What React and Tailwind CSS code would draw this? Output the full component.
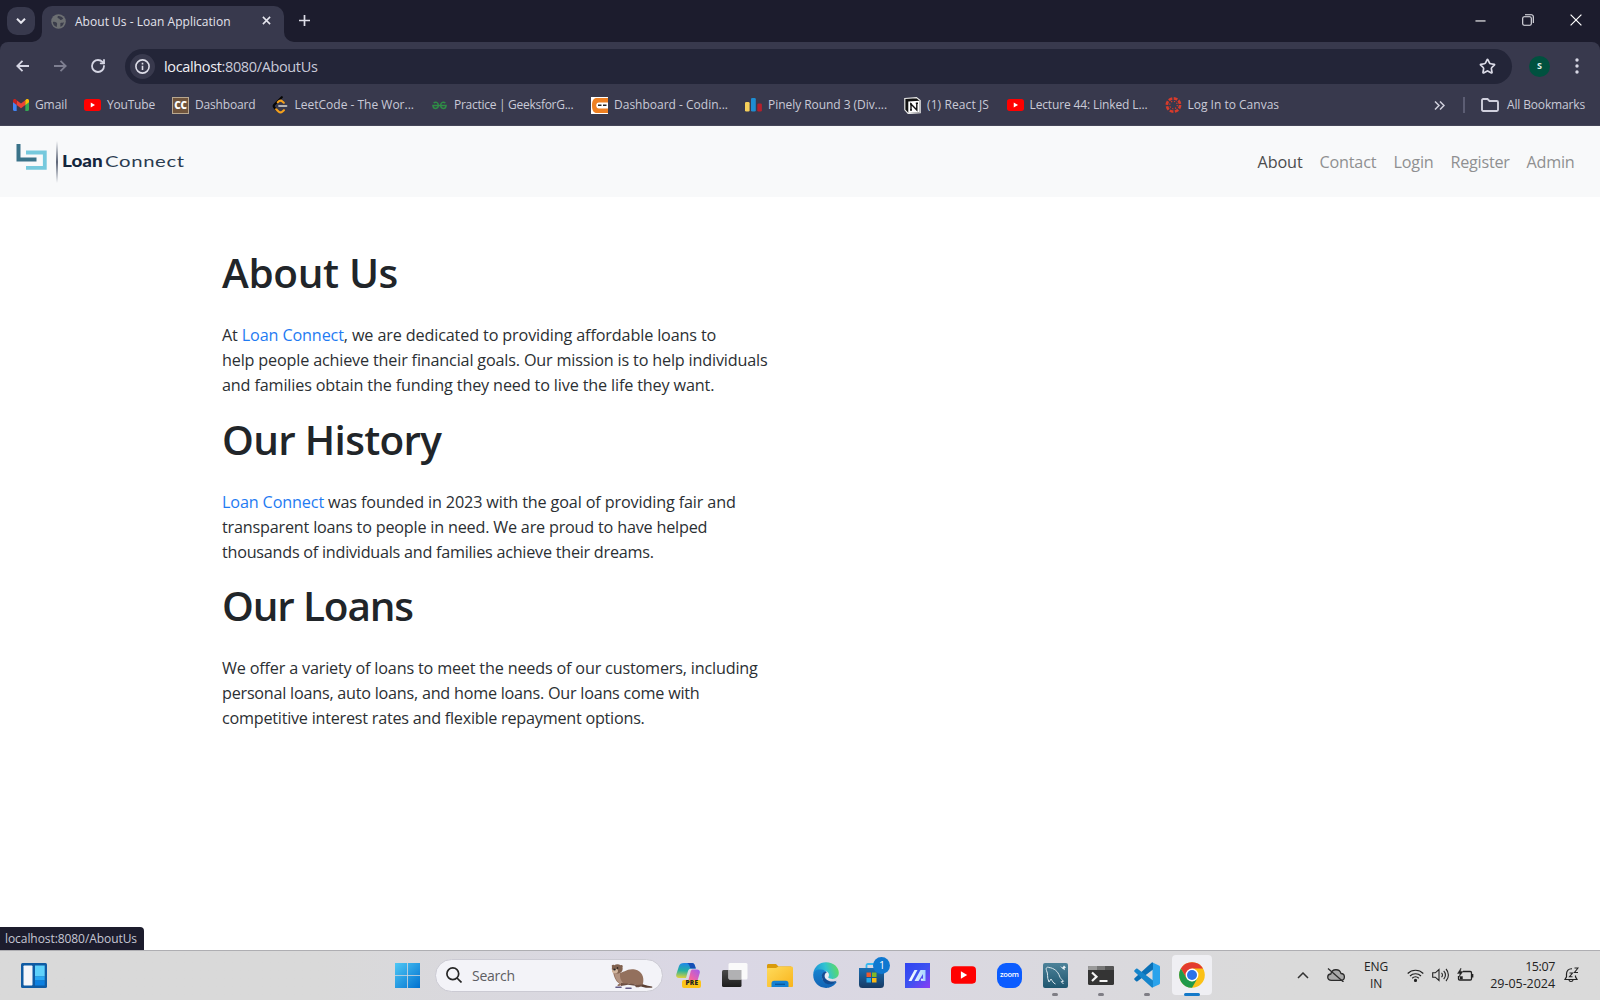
import { Star, RotateCw } from "lucide-react";

const YouTubeMark = ({ className }) => (
  <svg viewBox="0 0 26 18" className={className}>
    <rect width="26" height="18" rx="4" fill="#ff0000" />
    <path d="M10.3 5.2 16.8 9l-6.5 3.8z" fill="#fff" />
  </svg>
);

const GmailMark = () => (
  <svg viewBox="0 0 24 18" className="h-3 w-[16px]">
    <path d="M0 3v13.2C0 17.2.8 18 1.8 18H5.5V7z" fill="#4285f4" />
    <path d="M24 3v13.2c0 1-.8 1.8-1.8 1.8h-3.7V7z" fill="#34a853" />
    <path d="M5.500 1.800 12 6.800l6.500-5V9L12 14 5.500 9z" fill="#ea4335" />
    <path d="M0 3C0 .3 2.600-.6 4.500.9l1 .9V9L0 5z" fill="#c5221f" />
    <path d="M24 3c0-2.700-2.600-3.600-4.500-2.100l-1 .9V9L24 5z" fill="#fbbc04" />
  </svg>
);

const CodeChefMark = () => (
  <div className="flex size-[17px] items-center justify-center border border-[#b8a78f] bg-[#6f543d] text-[10px] font-extrabold leading-none tracking-[-0.3px] text-white">
    CC
  </div>
);

const LeetCodeMark = () => (
  <svg viewBox="0 0 16 18" className="h-[18px] w-[16px]" fill="none" strokeWidth="2.1" strokeLinecap="round">
    <path d="M9.8 1.2 2.5 8.4c-1 1-1 2.3 0 3.3l1.7 1.7" stroke="#050505" />
    <path d="M5.8 6.2 7 5.100c1.200-.7 2.400-.5 3.400.4l1.400 1.200M4.200 13.300l2.300 2.200c1.200 1.100 2.800 1.100 4 0l1.400-1.300" stroke="#f5a11c" />
    <path d="M7 10h7.500" stroke="#b3b3b3" strokeWidth="1.8" />
  </svg>
);

const GeeksMark = () => (
  <svg viewBox="0 0 16 10" className="h-[9px] w-[15px]" fill="none" stroke="#2f8d46" strokeWidth="1.6">
    <path d="M1.5 2.2c1.8-1.700 5.200-1 5.200 2.600 0 4.600-5.600 4.600-6 .3h14.600c-.4 4.300-6 4.300-6-.3 0-3.600 3.400-4.300 5.200-2.600" />
  </svg>
);

const CodingNinjasMark = () => (
  <svg viewBox="0 0 17 17" className="size-[17px]">
    <rect width="17" height="17" fill="#fff" />
    <path d="M17 1H6C2.600 1 1 3.500 1 8.500S2.600 16 6 16h11v-4.500H8c-2 0-2.500-1-2.500-3s.5-3 2.500-3h9z" fill="#ee8022" />
    <rect x="5.500" y="6" width="11.500" height="5" rx="2" fill="#fff" />
    <path d="M7 8.300h3.500M12 8.300h3.500" stroke="#222" strokeWidth="1.500" />
  </svg>
);

const CodeforcesMark = () => (
  <svg viewBox="0 0 17 14" className="h-[14px] w-[17px]">
    <rect x="0" y="4" width="4.600" height="9.500" rx="1.300" fill="#f6cf5a" />
    <rect x="6" y="0" width="4.800" height="13.500" rx="1.300" fill="#1e8dd2" />
    <rect x="12.300" y="5.500" width="4.600" height="8" rx="1.300" fill="#b5202c" />
  </svg>
);

const NotionMark = () => (
  <svg viewBox="0 0 17 17" className="size-[17px]">
    <path d="M.8 1.500 12.500.6l3.700 2.900v12.300l-12 .7L.8 12.800z" fill="#111" stroke="#e8e8e8" strokeWidth="1.200" />
    <path d="M4.300 4.500 15.600 3.800v11.400L4.300 16z" fill="#fff" />
    <path d="M7 13V7l5.800 6V6.300M6 7h2M6 13h2M11.800 6.300h2.200" stroke="#111" strokeWidth="1.400" fill="none" />
  </svg>
);

const CanvasMark = () => (
  <svg viewBox="0 0 18 18" className="size-[18px]" fill="none" stroke="#d83b2b">
    <circle cx="9" cy="9" r="7" strokeWidth="2.800" strokeDasharray="4 1.500" />
    <circle cx="9" cy="9" r="4" strokeWidth="1.300" strokeDasharray="1.300 1.840" />
  </svg>
);

const bookmarks = [
  { label: "Gmail", icon: <GmailMark />, w: "w-[72px]", t: "tracking-[-0.1px]" },
  { label: "YouTube", icon: <YouTubeMark className="h-3 w-[17px]" />, w: "w-[88px]", t: "tracking-[-0.2px]" },
  { label: "Dashboard", icon: <CodeChefMark />, w: "w-[99.5px]", t: "tracking-[-0.17px]" },
  { label: "LeetCode - The Wor...", icon: <LeetCodeMark />, w: "w-[159.5px]", t: "" },
  { label: "Practice | GeeksforG...", icon: <GeeksMark />, w: "w-[160px]", t: "tracking-[-0.28px]" },
  { label: "Dashboard - Codin...", icon: <CodingNinjasMark />, w: "w-[154px]", t: "" },
  { label: "Pinely Round 3 (Div....", icon: <CodeforcesMark />, w: "w-[159px]", t: "tracking-[-0.05px]" },
  { label: "(1) React JS", icon: <NotionMark />, w: "w-[102.500px]", t: "tracking-[0.1px]" },
  { label: "Lecture 44: Linked L...", icon: <YouTubeMark className="h-3 w-[17px]" />, w: "w-[158px]", t: "tracking-[-0.13px]" },
  { label: "Log In to Canvas", icon: <CanvasMark />, w: "w-[130px]", t: "" },
];

function TabStrip() {
  return (
    <div className="flex h-[42px] shrink-0 items-start bg-[#1c1c2d]">
      <button className="mt-[7px] ml-[7px] flex size-[28px] items-center justify-center rounded-[10px] bg-[#38394d]">
        <svg viewBox="0 0 10 6" className="h-[6px] w-[10px]" fill="none" stroke="#e6e6ee" strokeWidth="2">
          <path d="m1 .8 4 4 4-4" />
        </svg>
      </button>
      <div className="relative mt-[6px] ml-[7px] flex h-[36px] w-[242px] items-center rounded-t-[10px] bg-[#38394d] pb-[5px]">
        <svg viewBox="0 0 10 10" className="absolute bottom-0 -left-[10px] size-[10px]"><path d="M10 0v10H0A10 10 0 0 0 10 0" fill="#38394d" /></svg>
        <svg viewBox="0 0 10 10" className="absolute -right-[10px] bottom-0 size-[10px]"><path d="M0 0v10h10A10 10 0 0 1 0 0" fill="#38394d" /></svg>
        <svg viewBox="0 0 16 16" className="ml-[9px] size-[15px]">
          <circle cx="8" cy="8" r="7.800" fill="#6c6f72" />
          <path d="M2 8.500c2-.8 4 .2 4.500 1.700.3 1.200-.5 2-.3 3.600C3.800 13.300 2 11 2 8.500M7.500 2.200c1.500-.5 4.500.7 5.600 2.800-1 .3-1.700 1.500-3 1.300C9 6 9.500 5 8.200 4.800 6.800 4.500 6.500 3 7.500 2.200M10 9.500c1.500-.5 3-.2 3.800-.8-.3 2.300-1.800 4.300-3.800 5z" fill="#3b3d4b" />
        </svg>
        <span className="mt-px ml-[9px] whitespace-nowrap text-[12px] leading-4 tracking-[0.03px] text-[#e3e3ec]">About Us - Loan Application</span>
        <svg viewBox="0 0 10 10" className="absolute top-[10px] left-[220px] size-[9px]" stroke="#e6e6ee" strokeWidth="1.700"><path d="m1 1 8 8M9 1 1 9" /></svg>
      </div>
      <svg viewBox="0 0 11 11" className="mt-[15px] ml-[15px] size-[11px]" stroke="#dedee8" strokeWidth="1.700"><path d="M5.500 0v11M0 5.500h11" /></svg>
      <div className="mt-[14px] mr-[18px] ml-auto flex items-center gap-[36px]">
        <svg viewBox="0 0 12 12" className="size-[11px]" stroke="#fff" strokeWidth="1.200"><path d="M.5 6.500h11" /></svg>
        <svg viewBox="0 0 12 12" className="size-3" fill="none" stroke="#e8e8ee" strokeWidth="1.100"><rect x=".7" y="2.700" width="8.600" height="8.600" rx="1.500" /><path d="M3 .7h6.300a2 2 0 0 1 2 2V9" /></svg>
        <svg viewBox="0 0 12 12" className="size-3" stroke="#fff" strokeWidth="1.200"><path d="m.6.6 10.800 10.800M11.400.6.600 11.400" /></svg>
      </div>
    </div>
  );
}

function Toolbar() {
  return (
    <div className="shrink-0 bg-[#1c1c2d]">
      <div className="flex h-[84px] flex-col rounded-t-[8px] border-b border-[#454658] bg-[#38394d]">
        <div className="flex h-[48px] items-center">
          <svg viewBox="0 0 13 12" className="ml-[16px] h-3 w-[13px]" fill="none" stroke="#d5d6e4" strokeWidth="1.800"><path d="M13 6H1.500M6.500.8 1.300 6l5.200 5.200" /></svg>
          <svg viewBox="0 0 13 12" className="ml-[25px] h-3 w-[13px]" fill="none" stroke="#7e7f91" strokeWidth="1.800"><path d="M0 6h11.500M6.500.8 11.700 6l-5.200 5.200" /></svg>
          <RotateCw className="ml-[23px] size-[16px] text-[#d5d6e4]" strokeWidth={2.700} />
          <div className="ml-[19px] flex h-[35px] w-[1387px] items-center rounded-full bg-[#232538] pr-[16px]">
            <div className="ml-[5px] flex size-[25px] items-center justify-center rounded-full bg-[#38394d]">
              <svg viewBox="0 0 15 15" className="size-[15px]" fill="none" stroke="#dddde8" strokeWidth="1.600"><circle cx="7.500" cy="7.500" r="6.600" /><path d="M7.500 6.700V11M7.500 3.800v1.600" /></svg>
            </div>
            <span className="mt-px ml-[9px] text-[14.5px] tracking-[-0.36px] text-[#c9cad8]"><span className="text-[#f0f0f5]">localhost</span>:8080/AboutUs</span>
            <Star className="ml-auto size-[17px] text-[#dcdce8]" strokeWidth={2.400} strokeLinejoin="miter" />
          </div>
          <div className="ml-[17px] flex size-[21px] items-center justify-center rounded-full bg-[#00513f] text-[9px] font-bold uppercase text-[#e0f0ea]">s</div>
          <svg viewBox="0 0 4 16" className="ml-[25px] h-[16px] w-1" fill="#d8d8e4"><circle cx="2" cy="2" r="1.700" /><circle cx="2" cy="8" r="1.700" /><circle cx="2" cy="14" r="1.700" /></svg>
        </div>
        <div className="flex h-[30px] items-center pl-3 text-[12px] text-[#c9cad7]">
          {bookmarks.map((b) => (
            <div key={b.label} className={`flex shrink-0 items-center ${b.w}`}>
              <span className="flex w-[17px] shrink-0 justify-center">{b.icon}</span>
              <span className={`ml-[6px] whitespace-nowrap leading-4 ${b.t}`}>{b.label}</span>
            </div>
          ))}
          <svg viewBox="0 0 11 9" className="ml-auto h-[9px] w-[11px]" fill="none" stroke="#d0d0dd" strokeWidth="1.500"><path d="m1 .5 4 4-4 4M6 .5l4 4-4 4" /></svg>
          <div className="ml-[18px] h-4 w-[1.500px] bg-[#5c5d73]" />
          <svg viewBox="0 0 18 14" className="ml-[16px] h-[14px] w-[18px]" fill="none" stroke="#d0d0dd" strokeWidth="1.900"><path d="M1 2.200C1 1.500 1.500 1 2.200 1h4.300l2 2h7.300c.7 0 1.200.5 1.200 1.200v7.600c0 .7-.5 1.200-1.200 1.200H2.200C1.500 13 1 12.500 1 11.800z" /></svg>
          <span className="mr-[15px] ml-[8px] whitespace-nowrap tracking-[-0.15px]">All Bookmarks</span>
        </div>
      </div>
    </div>
  );
}

function SiteNav() {
  return (
    <nav className="flex h-[71px] shrink-0 items-center bg-[#f8f9fa]">
      <svg viewBox="0 0 32 28" className="mb-[9px] ml-4 h-[28px] w-[32px]" fill="none">
        <path d="M10 9.500h18.800v15.300H10" stroke="#76c9dd" strokeWidth="3.800" />
        <path d="M2.500 1v15.500h18" stroke="#3a7389" strokeWidth="4" />
      </svg>
      <div className="ml-[8px] h-[42px] w-[1.500px] bg-linear-to-b from-transparent via-[#5d6678] to-transparent" />
      <div className="mb-px ml-[4px] flex items-center font-[Lato,sans-serif] text-[16px] leading-5">
        <span className="w-[43.500px] origin-left scale-x-[1.18] font-black text-[#14263d]">Loan</span>
        <span className="origin-left scale-x-[1.27] font-normal tracking-[0.5px] text-[#2b3c50]">Connect</span>
      </div>
      <div className="mt-px mr-[25px] ml-auto flex items-center text-[16.2px] text-[#8f9091]">
        <span className="w-[62px] tracking-[-0.1px] text-[#4b4c4d]">About</span>
        <span className="w-[74px] tracking-[-0.2px]">Contact</span>
        <span className="w-[57px] tracking-[-0.2px]">Login</span>
        <span className="w-[76px] tracking-[-0.25px]">Register</span>
        <span className="w-[48.500px] tracking-[-0.25px]">Admin</span>
      </div>
    </nav>
  );
}

const Brand = () => <span className="text-[#1f7bf2]">Loan Connect</span>;

const sections = [
  {
    title: "About Us",
    t: "tracking-[-0.35px]",
    lines: [
      [<>At <Brand />, we are dedicated to providing affordable loans to</>, "tracking-[-0.14px]"],
      ["help people achieve their financial goals. Our mission is to help individuals", "tracking-[-0.175px]"],
      ["and families obtain the funding they need to live the life they want.", "tracking-[-0.15px]"],
    ],
  },
  {
    title: "Our History",
    t: "tracking-[-0.7px]",
    lines: [
      [<><Brand /> was founded in 2023 with the goal of providing fair and</>, "tracking-[-0.14px]"],
      ["transparent loans to people in need. We are proud to have helped", "tracking-[-0.2px]"],
      ["thousands of individuals and families achieve their dreams.", "tracking-[-0.25px]"],
    ],
  },
  {
    title: "Our Loans",
    t: "tracking-[-1.15px]",
    lines: [
      ["We offer a variety of loans to meet the needs of our customers, including", "tracking-[-0.18px]"],
      ["personal loans, auto loans, and home loans. Our loans come with", "tracking-[-0.24px]"],
      ["competitive interest rates and flexible repayment options.", "tracking-[-0.24px]"],
    ],
  },
];

function Content() {
  return (
    <main className="relative flex-1 bg-white pt-[51px] pl-[222px]">
      {sections.map((s) => (
        <section key={s.title} className="h-[166.700px]">
          <h1 className={`h-[50px] text-[40.5px] font-semibold leading-[50px] text-[#212529] ${s.t}`}>{s.title}</h1>
          <div className="pt-[25px] text-[16.2px] leading-[25px] text-[#2b2f33]">
            {s.lines.map(([text, t], i) => (
              <p key={i} className={`whitespace-nowrap ${t}`}>{text}</p>
            ))}
          </div>
        </section>
      ))}
      <div className="absolute bottom-0 left-0 flex h-[23px] w-[144px] items-center rounded-tr-[4px] bg-[#1c1c2d] pl-[5px] text-[12px] tracking-[-0.07px] text-[#c6c7d4]">
        localhost:8080/AboutUs
      </div>
    </main>
  );
}

const WindowsLogo = () => (
  <svg viewBox="0 0 25 25" className="size-[25px]">
    <defs><linearGradient id="win" x1="0" y1="0" x2="1" y2="1"><stop stopColor="#4fc8f5" /><stop offset="1" stopColor="#0070cf" /></linearGradient></defs>
    <path d="M0 0h12v12H0zM12.800 0H25v12H12.800zM0 12.800h12V25H0zM12.800 12.800H25V25H12.800z" fill="url(#win)" />
  </svg>
);

const Widgets = () => (
  <svg viewBox="0 0 26 25" className="h-[25px] w-[26px]">
    <rect width="26" height="25" rx="1.500" fill="#0f5ba3" />
    <rect x="2.500" y="2.500" width="9" height="20" rx=".8" fill="#f4f6fa" />
    <rect x="14" y="2.500" width="9.700" height="11" fill="#5fd2fb" />
    <rect x="14" y="13.500" width="9.700" height="4" fill="#28a8f4" />
    <rect x="14" y="17.500" width="9.700" height="5" fill="#0d80e0" />
  </svg>
);

const Otter = () => (
  <svg viewBox="0 0 44 26" className="h-[26px] w-[44px]">
    <path d="M28 18c4 2 8 4 14 4.500.8.500.5 1.200-.5 1.300-6 .3-10-.5-14-3z" fill="#5a4034" />
    <path d="M8 9c6 0 9-5 17-3.500 7 1.500 9.500 8 8 14-.6 2.500-3 3-6 2.800l-1-1.600-7-1-7 1.300-3 1c-1.500.300-2-.5-1-1.500l1.500-1C5 17 4 12 3 8z" fill="#93705d" />
    <path d="M4 8c1 6 3 9 6 12l3-1c-2.500-3-3.500-6-3-10z" fill="#b29280" />
    <path d="M11 19c4 1 12 0 16 2l5-.500c0 2-3 3-6 2.800l-1-1.600-7-1-7 1.300z" fill="#6d5044" />
    <path d="M2 3C1 1 3 .3 4.200 1.200 6 0 9 0 10.500 1.200c1.500-.8 3 .3 2 2C13.300 7 11 9.500 7 9.500S1.200 6.500 2 3" fill="#80614f" />
    <ellipse cx="5" cy="7" rx="3" ry="2.300" fill="#d1b49d" />
    <ellipse cx="4.500" cy="5.500" rx="1.300" ry=".9" fill="#222" />
    <circle cx="7.500" cy="4" r=".8" fill="#111" />
    <path d="M6 23.300h5M16 24.300h5" stroke="#625a85" strokeWidth="1.600" strokeLinecap="round" />
  </svg>
);

const Copilot = () => (
  <div className="relative size-[25px]">
    <svg viewBox="0 0 24 22" className="h-[22px] w-6">
      <defs>
        <linearGradient id="cpa" x1="0.300" y1="0" x2="0.200" y2="1"><stop stopColor="#2089e8" /><stop offset=".5" stopColor="#25b1a0" /><stop offset="1" stopColor="#e4d13a" /></linearGradient>
        <linearGradient id="cpb" x1="1" y1="0" x2="0" y2="1"><stop stopColor="#9f5cf0" /><stop offset=".6" stopColor="#f162a4" /><stop offset="1" stopColor="#fb8c54" /></linearGradient>
      </defs>
      <path d="M8 0h8c1.500 0 2.500 1 3 3l.8 2.500H15c-1.500 0-2.500 1-3 2.500L10 15H3c-2.500 0-3.300-1.500-2.600-4L3 3C3.800 1 5 0 8 0" fill="url(#cpa)" />
      <path d="M11 0h5c1.500 0 2.500 1 3 3l.8 2.500h-5.500C13.500 2.500 13 1 11 0" fill="#154fb5" />
      <path d="M16 6.500h5c2.500 0 3.300 1.700 2.600 4L22 16c-1 3-2 4.500-5 4.500H9c2 0 2.800-1 3.300-3L14.500 9c.3-1.500.7-2 1.500-2.500" fill="url(#cpb)" />
    </svg>
    <span className="absolute top-[17px] left-[6px] flex h-2 w-[19px] items-center justify-center rounded-[2px] bg-[#fcc419] text-[6.500px] font-extrabold leading-none tracking-[0.300px] text-[#222]">PRE</span>
  </div>
);

const TaskView = () => (
  <svg viewBox="0 0 26 24" className="h-[24px] w-[26px]">
    <defs><linearGradient id="tv" x2="0" y2="1"><stop stopColor="#4a4a4a" /><stop offset="1" stopColor="#1d1d1d" /></linearGradient></defs>
    <rect x="0" y="7" width="19.500" height="17" rx="1.500" fill="url(#tv)" />
    <rect x="6.500" y="0" width="19" height="16.500" rx="1.500" fill="#fafafa" />
    <path d="M6.500 7h13v9.500h-11.500a1.500 1.500 0 0 1-1.500-1.500z" fill="#b1b1b3" />
  </svg>
);

const Folder = () => (
  <svg viewBox="0 0 26 23" className="h-[23px] w-[26px]">
    <defs><linearGradient id="fd" x2="1" y2="1"><stop stopColor="#fedb5c" /><stop offset="1" stopColor="#f9b41c" /></linearGradient></defs>
    <path d="M0 1.500C0 .6.600 0 1.500 0H9l2.500 2.500H24v4H0z" fill="#d99a0b" />
    <path d="M1 4h8l2.500-1.500H24.500c.8 0 1.500.6 1.500 1.500v18c0 .5-.5 1-1 1H1c-.5 0-1-.5-1-1V5c0-.6.400-1 1-1" fill="url(#fd)" />
    <path d="M4.500 23v-3.500c0-1.700 1-2.700 2.700-2.700h11.600c1.700 0 2.700 1 2.700 2.700V23z" fill="#1481d2" />
    <path d="M8 20.300h10" stroke="#0a579c" strokeWidth="1.400" />
  </svg>
);

const Edge = () => (
  <svg viewBox="0 0 26 26" className="size-[26px]">
    <defs>
      <linearGradient id="ea" x1="0" y1=".5" x2="1" y2=".3"><stop stopColor="#1b8fd8" /><stop offset=".5" stopColor="#31c3d2" /><stop offset="1" stopColor="#62dc5c" /></linearGradient>
      <linearGradient id="eb" x1="0" y1="0" x2="0" y2="1"><stop stopColor="#1683d0" /><stop offset="1" stopColor="#1263b4" /></linearGradient>
    </defs>
    <path d="M.3 11.500C1.200 4.500 6.500.200 13 .200c8 0 12.800 5.300 12.800 10.600 0 4-3 6.200-6.300 6.200-3.500 0-4.800-1-4.300-2 1.300-1.300 1.300-5-3.200-6.200C7 7.500 2 9 .3 11.500" fill="url(#ea)" />
    <path d="M.2 13C.200 9 4 7 8 7.500c3 .2 5.200 1.700 6 3-3-1-5.500 1.500-5 5 .5 4.500 5.500 7.500 11 5.500l3-1.200c.5-.100.7.300.4.700C20 25 16 26 13 25.900 6 25.800.200 20.500.200 13" fill="url(#eb)" />
    <path d="M9 15.500C8 9.500 13 9.500 14 10.500c-3.500 1-3.500 6.500 2 8.500 3 1 6 .4 7.500-.3-2 3.300-6.500 4.300-9.500 3.300-3-1-4.700-3.500-5-6.500" fill="#114c93" />
    <path d="M12 14c0-2 1.200-3.500 2.500-3.500 1.700 1.500 1.500 3.500.7 4.500-.3 1 1 2 4.300 2-2 1-7.500 1-7.500-3" fill="#e8ecf3" />
  </svg>
);

const Store = () => (
  <div className="relative size-[25px]">
    <svg viewBox="0 0 25 25" className="size-[25px]">
      <defs><linearGradient id="st" x2="0" y2="1"><stop stopColor="#1a6fb3" /><stop offset="1" stopColor="#173a63" /></linearGradient></defs>
      <path d="M7.500 5V2.500C7.500 1.500 8 1 9 1h7c1 0 1.500.5 1.500 1.500V5" fill="none" stroke="#35b8f1" strokeWidth="1.800" />
      <path d="M0 5h25v16.500a3.500 3.500 0 0 1-3.500 3.500h-18A3.500 3.500 0 0 1 0 21.500z" fill="url(#st)" />
      <path d="M7.500 9.500h4.500V14H7.500z" fill="#f0592b" /><path d="M13 9.500h4.500V14H13z" fill="#80ba27" /><path d="M7.500 15h4.500v4.500H7.500z" fill="#27a8ea" /><path d="M13 15h4.500v4.500H13z" fill="#fdb913" />
    </svg>
    <span className="absolute -top-[6px] left-[14px] flex size-[17px] items-center justify-center rounded-full bg-[#0f78d0] text-[10.5px] leading-none text-white">1</span>
  </div>
);

const MyAsus = () => (
  <svg viewBox="0 0 25 25" className="size-[25px]">
    <defs><linearGradient id="ma" x2="1" y2="1"><stop stopColor="#2f43f2" /><stop offset=".5" stopColor="#3d52f0" /><stop offset="1" stopColor="#8a3cf5" /></linearGradient><linearGradient id="mb" x2="1" y2="0"><stop stopColor="#fff" /><stop offset="1" stopColor="#a8d5ff" /></linearGradient></defs>
    <rect width="25" height="25" fill="url(#ma)" />
    <path d="M3.500 18 9.500 7H12.500L6.500 18zM9.500 18l6-11h5v11h-2.500v-7L13.500 18z" fill="url(#mb)" />
    <circle cx="17" cy="16.800" r="1.200" fill="#d9ebff" />
  </svg>
);

const Zoom = () => (
  <div className="flex size-[25px] items-center justify-center rounded-[9px] bg-[#0b5cff] text-[7.500px] font-semibold leading-none tracking-[-0.300px] text-white">zoom</div>
);

const MySql = () => (
  <svg viewBox="0 0 25 25" className="size-[25px]">
    <defs><linearGradient id="ms" x2="0" y2="1"><stop stopColor="#4d8299" /><stop offset="1" stopColor="#1f566f" /></linearGradient></defs>
    <rect width="25" height="25" rx="2" fill="url(#ms)" />
    <path d="M6 19C3.500 14 5.500 11 3.500 7.500 2.500 5 4 3.500 6 4.500c5 .5 9 4 10.500 8.500.5 2 2 3 4 5.300l-2.300.4 2.300 2.300M6 19l2-3c1.500 2 2 4 4.500 5" fill="none" stroke="#dbe7ed" strokeWidth="1" />
    <path d="m17 3 2.500 1.500L21 2.500l2 2-1.500.8.5 2-2.500-1.500z" fill="#e8f0f4" />
  </svg>
);

const Terminal = () => (
  <svg viewBox="0 0 26 19" className="h-[19px] w-[26px]">
    <rect width="26" height="19" rx="1.500" fill="#343434" />
    <path d="M1.500 0H9v4H0V1.500Q0 0 1.500 0" fill="#9b9b9b" /><path d="M9 0h8v4H9z" fill="#777" /><path d="M17 0h7.500Q26 0 26 1.500V4h-9z" fill="#555" />
    <path d="m4 6.500 4.500 4.200L4 15" fill="none" stroke="#f3f3f3" strokeWidth="2.200" /><path d="M11.500 15h8" stroke="#f3f3f3" strokeWidth="2" />
  </svg>
);

const VSCode = () => (
  <svg viewBox="0 0 26 26" className="size-[26px]">
    <path d="M18.500.5 25 3.500c.6.300 1 .8 1 1.500v16c0 .7-.4 1.200-1 1.500l-6.500 3z" fill="#2aa3ec" />
    <path d="M19 .5v7L3.500 19.200c-.5.400-1 .3-1.400 0L.5 17.700c-.5-.5-.5-1 0-1.500L17.500.800c.5-.4 1-.5 1.500-.3" fill="#0a70b6" />
    <path d="M19 25.500v-7L3.500 6.800c-.5-.4-1-.3-1.400 0L.5 8.300c-.5.5-.5 1 0 1.500l17 15.400c.5.400 1 .5 1.500.3" fill="#1585cb" />
  </svg>
);

const Chrome = () => (
  <svg viewBox="0 0 26 26" className="size-[26px]">
    <circle cx="13" cy="13" r="12.800" fill="#fbc116" />
    <path d="M1.900 6.600A12.800 12.800 0 0 1 24.100 6.600H13L7.500 16.200z" fill="#e33b2e" />
    <path d="M1.900 6.600 7.500 16.200 13 19.400l5.500-3.200L13 25.800A12.800 12.800 0 0 1 1.900 6.600" fill="#219a4a" />
    <circle cx="13" cy="13" r="6.400" fill="#fff" /><circle cx="13" cy="13" r="5" fill="#2c73e8" />
  </svg>
);

const apps = [
  { id: "copilot", el: <Copilot /> },
  { id: "taskview", el: <TaskView /> },
  { id: "folder", el: <Folder /> },
  { id: "edge", el: <Edge /> },
  { id: "store", el: <Store /> },
  { id: "asus", el: <MyAsus /> },
  { id: "youtube", el: <YouTubeMark className="h-[18px] w-[25px]" /> },
  { id: "zoom", el: <Zoom /> },
  { id: "mysql", el: <MySql />, running: true },
  { id: "terminal", el: <Terminal />, running: true },
  { id: "vscode", el: <VSCode />, running: true },
  { id: "chrome", el: <Chrome />, active: true },
];

function Taskbar() {
  return (
    <footer className="flex h-[50px] shrink-0 items-center border-t border-[#aeaeb2] bg-linear-to-r from-[#d9d9d9] from-20% via-[#dad7e5] via-45% to-[#dadada] to-80% text-[#222]">
      <div className="mb-px ml-[21px]"><Widgets /></div>
      <div className="ml-[348px]"><WindowsLogo /></div>
      <div className="mb-px ml-[15px] flex h-[33px] w-[228px] items-center rounded-full border border-[#cbcad3] bg-[#f3f3f8]">
        <svg viewBox="0 0 16 16" className="ml-[10px] size-[16px]" fill="none" stroke="#252525" strokeWidth="1.700"><circle cx="6.800" cy="6.800" r="5.900" /><path d="m11 11 4.500 4.500" /></svg>
        <span className="ml-[10px] text-[14px] tracking-[-0.250px] text-[#5d5d62]">Search</span>
        <div className="mt-[3px] mr-[8px] ml-auto"><Otter /></div>
      </div>
      <div className="mb-px ml-[3px] flex">
        {apps.map((a) => (
          <div key={a.id} className="relative flex h-[49px] w-[45.770px] items-center justify-center">
            {a.active && <div className="absolute top-[4px] left-[3px] h-[40px] w-[40px] rounded-[4px] bg-[#efeff3]" />}
            <div className="relative">{a.el}</div>
            {a.running && <div className="absolute bottom-[4px] h-[3px] w-[6px] rounded-full bg-[#7f7e85]" />}
            {a.active && <div className="absolute bottom-[4px] h-[3px] w-[16px] rounded-full bg-[#1479c9]" />}
          </div>
        ))}
      </div>
      <div className="mr-[21px] mb-px ml-auto flex items-center">
        <svg viewBox="0 0 12 7" className="h-[7px] w-3" fill="none" stroke="#333" strokeWidth="1.500"><path d="m1 6 5-5 5 5" /></svg>
        <svg viewBox="0 0 18 14" className="ml-[18px] h-[14px] w-[18px]" fill="#a9a9a9" stroke="#2c2c2c" strokeWidth="1.300"><path d="M4.500 12.400C-.5 12.300-.3 6.300 3.800 6 5 .5 12.500.300 14 5.500c4.500.3 4.500 6.500 0 6.900z" /><path d="m1 .5 15.500 13.500" /></svg>
        <div className="ml-[18px] w-[26px] text-center text-[12px] leading-[17px] tracking-[-0.200px]"><div>ENG</div><div>IN</div></div>
        <svg viewBox="0 0 17 13" className="ml-[18px] h-[13px] w-[17px]" fill="none" stroke="#222" strokeWidth="1.200"><path d="M.7 4.500a11 11 0 0 1 15.600 0M3 7a7.800 7.800 0 0 1 11 0M5.200 9.300a4.700 4.700 0 0 1 6.600 0" /><circle cx="8.500" cy="11.400" r="1" fill="#222" /></svg>
        <svg viewBox="0 0 18 14" className="ml-[8px] h-[14px] w-[18px]" fill="none" stroke="#222" strokeWidth="1.100"><path d="M.7 4.800v4.400h2.600L7 12.500v-11L3.300 4.800zM9.500 4.800a3 3 0 0 1 0 4.400M11.700 2.800a6 6 0 0 1 0 8.400M14 1a8.700 8.700 0 0 1 0 12" /></svg>
        <svg viewBox="0 0 17 14" className="ml-[7px] h-[14px] w-[17px]" fill="none" stroke="#222" strokeWidth="1.300"><path d="M6 3.500h7.300c.8 0 1.200.4 1.200 1.200v6.100c0 .8-.4 1.200-1.200 1.200H2.700c-.8 0-1.200-.4-1.200-1.200V8M15.700 6v3.500" /><path d="M4 0 .5 5.500H3L2 9l4-5.500H3.500zM3 8.500h2.500V11H3z" fill="#222" strokeWidth=".4" /></svg>
        <div className="ml-[15px] w-[66px] text-right text-[12.5px] leading-[17px] tracking-[-0.050px]"><div className="tracking-[-0.400px]">15:07</div><div>29-05-2024</div></div>
        <svg viewBox="0 0 15 16" className="ml-[9px] h-[16px] w-[15px]" fill="none" stroke="#222" strokeWidth="1.200"><path d="M8 1.800C4.500 1.500 2.500 4 2.500 7v2.800L1 12.500h12l-1.500-2.700V8.500M5 13c.3 2 3.700 2 4 0" /><path d="M5.500 6h3l-3 3.700h3M10.500 1H14l-3.500 4.500H14" strokeWidth="1.100" /></svg>
      </div>
    </footer>
  );
}

export default function App() {
  return (
    <div className="flex h-[1000px] w-[1600px] flex-col overflow-hidden font-['Open_Sans','Noto_Sans',sans-serif]">
      <TabStrip />
      <Toolbar />
      <SiteNav />
      <Content />
      <Taskbar />
    </div>
  );
}
